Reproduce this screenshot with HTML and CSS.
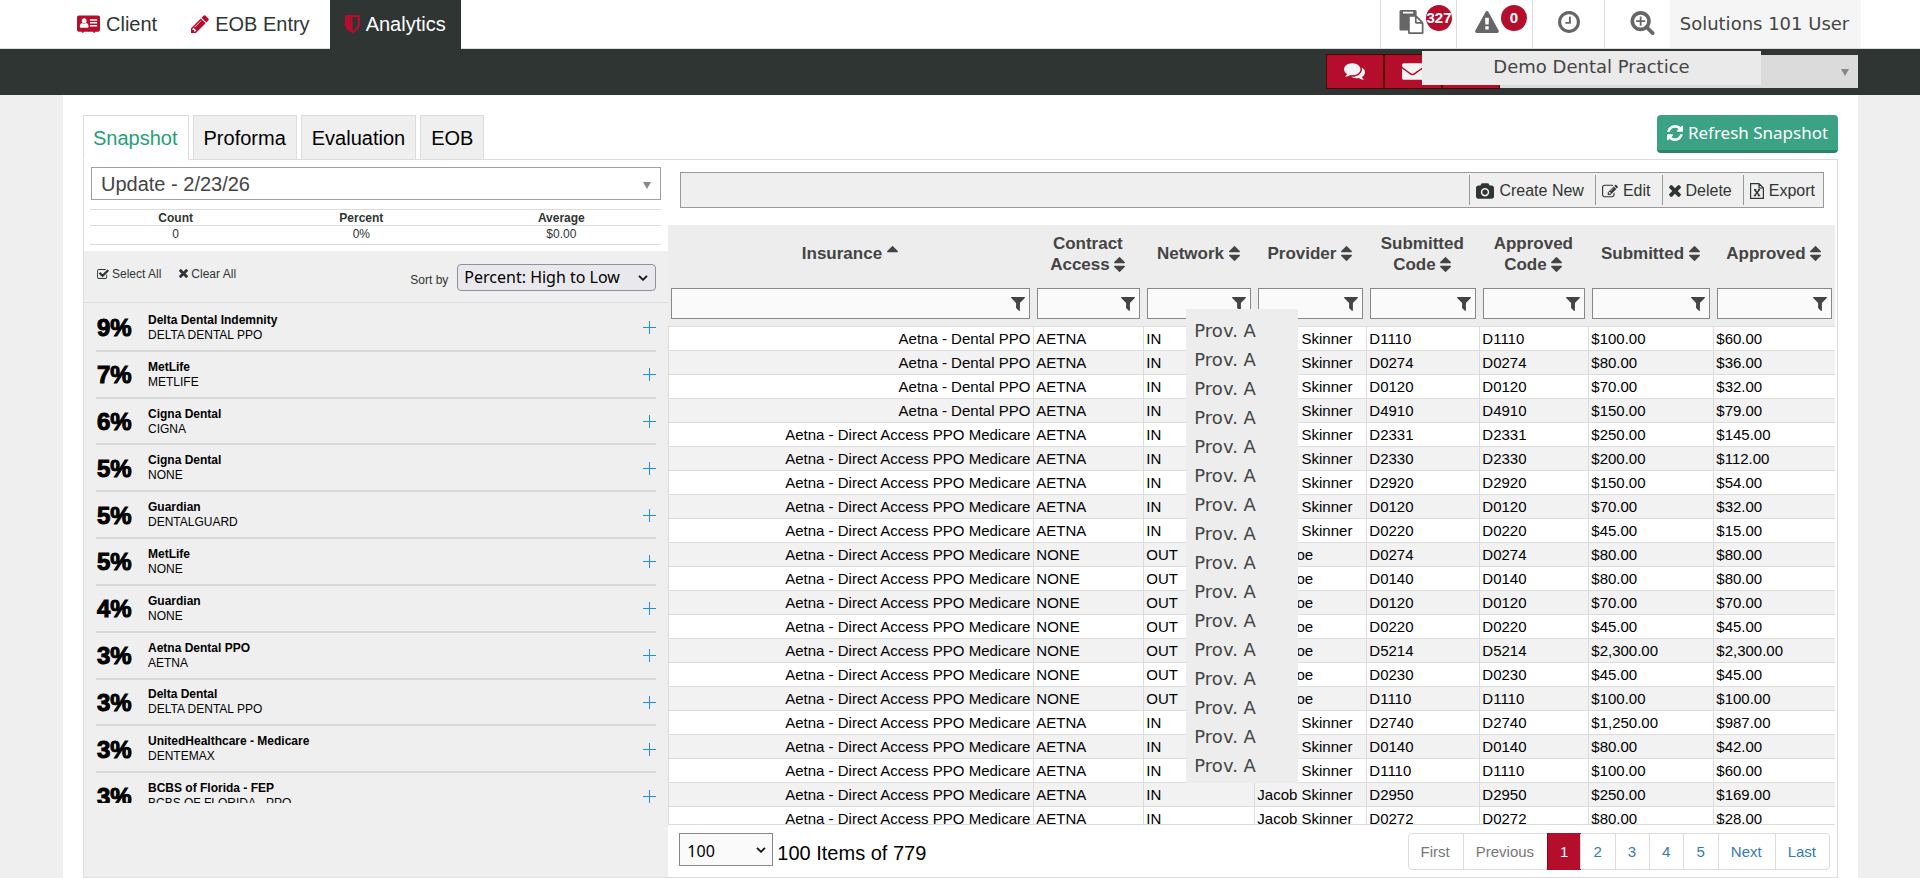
FILE: index.html
```html
<!DOCTYPE html>
<html lang="en">
<head>
<meta charset="utf-8">
<title>Analytics - Snapshot</title>
<link rel="stylesheet" href="styles.css">
</head>
<body>
<svg class="sprite" aria-hidden="true">
  <symbol id="i-card" viewBox="0 0 24 18"><path fill-rule="evenodd" d="M2 0h20a2 2 0 0 1 2 2v13a2 2 0 0 1-2 2h-3v1h-2v-1H7v1H5v-1H2a2 2 0 0 1-2-2V2a2 2 0 0 1 2-2zM7.500 3C5.800 3 5 4.200 5 5.500S5.800 8.500 7.500 8.500 10 7 10 5.500 9.200 3 7.500 3zM5.300 8C3.500 8.500 3 10 3 11.500 3 12.500 3.500 13 4.500 13h6c1 0 1.500-.5 1.500-1.500 0-1.500-.5-3-2.300-3.500-1.400 1.300-3 1.300-4.400 0zM13.500 4v1.500H21V4zm0 3v1.500H21V7zm0 3v1.500H21V10z"/></symbol>
  <symbol id="i-pencil" viewBox="128 128 1536 1536"><path d="M491 1536l91-91-235-235-91 91v107h128v128h107zm523-928q0-22-22-22-10 0-17 7l-542 542q-7 7-7 17 0 22 22 22 10 0 17-7l542-542q7-7 7-17zm-54-192l416 416-832 832h-416v-416zm683 96q0 53-37 90l-166 166-416-416 166-165q36-38 90-38 53 0 91 38l235 234q37 39 37 91z"/></symbol>
  <symbol id="i-shield" viewBox="256 128 1280 1536"><path d="M1344 960v-640h-448v1137q119-63 213-137 235-184 235-360zm192-768v768q0 86-33.500 170.500t-83 150-118 127.500-126.500 103-121 77.500-89.500 49.500-42.500 20q-12 6-26 6t-26-6q-16-7-42.500-20t-89.500-49.500-121-77.500-126.500-103-118-127.500-83-150-33.500-170.500v-768q0-26 19-45t45-19h1152q26 0 45 19t19 45z"/></symbol>
  <symbol id="i-paste" viewBox="0 0 1792 1792"><path d="M768 1664h896v-640h-416q-40 0-68-28t-28-68v-416h-384v1152zm256-1440v-64q0-13-9.500-22.500t-22.500-9.500h-704q-13 0-22.500 9.500t-9.500 22.500v64q0 13 9.500 22.500t22.500 9.500h704q13 0 22.500-9.500t9.500-22.500zm256 672h299l-299-299v299zm512 128v672q0 40-28 68t-68 28h-960q-40 0-68-28t-28-68v-160h-544q-40 0-68-28t-28-68v-1344q0-40 28-68t68-28h1088q40 0 68 28t28 68v328q21 13 36 28l408 408q28 28 48 76t20 88z"/></symbol>
  <symbol id="i-warn" viewBox="0 0 1792 1664"><path d="M1024 1375v-190q0-14-9.500-23.500t-22.500-9.500h-192q-13 0-22.500 9.500t-9.500 23.500v190q0 14 9.500 23.500t22.500 9.500h192q13 0 22.500-9.500t9.500-23.500zm-2-374l18-459q0-12-10-19-13-11-24-11h-220q-11 0-24 11-10 7-10 21l17 457q0 10 10 16.500t24 6.500h185q14 0 23.500-6.500t10.500-16.500zm-14-934l768 1408q35 63-2 126-17 29-46.500 46t-63.500 17h-1536q-34 0-63.500-17t-46.500-46q-37-63-2-126l768-1408q17-31 47-49t65-18 65 18 47 49z"/></symbol>
  <symbol id="i-clock" viewBox="128 128 1536 1536"><path d="M1024 544v448q0 14-9 23t-23 9h-320q-14 0-23-9t-9-23v-64q0-14 9-23t23-9h224v-352q0-14 9-23t23-9h64q14 0 23 9t9 23zm416 352q0-148-73-273t-198-198-273-73-273 73-198 198-73 273 73 273 198 198 273 73 273-73 198-198 73-273zm224 0q0 209-103 385.500t-279.500 279.500-385.500 103-385.500-103-279.500-279.500-103-385.500 103-385.500 279.500-279.500 385.500-103 385.500 103 279.500 279.500 103 385.500z"/></symbol>
  <symbol id="i-zoom" viewBox="64 128 1664 1664"><path d="M1088 800v64q0 13-9.500 22.500t-22.500 9.500h-224v224q0 13-9.500 22.500t-22.500 9.500h-64q-13 0-22.500-9.500t-9.500-22.500v-224h-224q-13 0-22.500-9.500t-9.500-22.500v-64q0-13 9.500-22.500t22.500-9.500h224v-224q0-13 9.500-22.500t22.500-9.500h64q13 0 22.500 9.500t9.500 22.500v224h224q13 0 22.500 9.500t9.500 22.500zm128 32q0-185-131.500-316.500t-316.500-131.500-316.500 131.500-131.500 316.500 131.500 316.500 316.500 131.500 316.500-131.500 131.500-316.500zm512 832q0 53-37.500 90.500t-90.500 37.500q-54 0-90-38l-343-342q-179 124-399 124-143 0-273.500-55.500t-225-150-150-225-55.500-273.500 55.500-273.500 150-225 225-150 273.500-55.500 273.500 55.500 225 150 150 225 55.500 273.500q0 220-124 399l343 343q37 37 37 90z"/></symbol>
  <symbol id="i-comments" viewBox="0 256 1792 1408"><path d="M1408 768q0 139-94 257t-256.500 186.500-353.500 68.500q-86 0-176-16-124 88-278 128-36 9-86 16h-3q-11 0-20.500-8t-11.500-21q-1-3-1-6.500t.5-6.500 2-6l2.500-5 3.500-5.500 4-5 4.500-5 4-4.500q5-6 23-25t26-29.500 22.500-29 25-38.500 20.500-44q-124-72-195-177t-71-224q0-139 94-257t256.500-186.500 353.500-68.500 353.500 68.500 256.500 186.500 94 257zm384 256q0 120-71 224.500t-195 176.500q10 24 20.500 44t25 38.500 22.500 29 26 29.500 23 25q1 1 4 4.500t4.500 5 4 5 3.500 5.500l2.500 5 2 6 .5 6.500-1 6.500q-3 14-13 22t-22 7q-50-7-86-16-154-40-278-128-90 16-176 16-271 0-472-132 58 4 88 4 161 0 309-45t264-129q125-92 192-212t67-254q0-77-23-152 129 71 204 178t75 230z"/></symbol>
  <symbol id="i-mail" viewBox="0 256 1792 1408"><path d="M1792 710v794q0 66-47 113t-113 47h-1472q-66 0-113-47t-47-113v-794q44 49 101 87 362 246 497 345 57 42 92.500 65.500t94.500 48 110 24.500h2q51 0 110-24.500t94.500-48 92.500-65.500q170-123 498-345 57-39 100-87zm0-294q0 79-49 151t-122 123q-376 261-468 325-10 7-42.500 30.500t-54 38-52 32.500-57.500 27-50 9h-2q-23 0-50-9t-57.500-27-52-32.500-54-38-42.500-30.500q-91-64-262-182.500t-205-142.500q-62-42-117-115.500t-55-136.500q0-78 41.500-130t118.500-52h1472q65 0 112.500 47t47.500 113z"/></symbol>
  <symbol id="i-refresh" viewBox="128 128 1536 1536"><path d="M1639 1056q0 5-1 7-64 268-268 434.500t-478 166.500q-146 0-282.500-55t-243.500-157l-129 129q-19 19-45 19t-45-19-19-45v-448q0-26 19-45t45-19h448q26 0 45 19t19 45-19 45l-137 137q71 66 161 102t187 36q134 0 250-65t186-179q11-17 53-117 8-23 30-23h192q13 0 22.500 9.500t9.500 22.500zm25-800v448q0 26-19 45t-45 19h-448q-26 0-45-19t-19-45 19-45l138-138q-148-137-349-137-134 0-250 65t-186 179q-11 17-53 117-8 23-30 23h-199q-13 0-22.500-9.500t-9.500-22.500v-7q65-268 270-434.500t480-166.500q146 0 284 55.500t245 156.500l130-129q19-19 45-19t45 19 19 45z"/></symbol>
  <symbol id="i-check" viewBox="64 128 1664 1408"><path d="M1472 930v318q0 119-84.500 203.500t-203.500 84.500h-832q-119 0-203.500-84.500t-84.500-203.500v-832q0-119 84.500-203.500t203.500-84.500h832q63 0 117 25 15 7 18 23 3 17-9 29l-49 49q-10 10-23 10-3 0-9-2-23-6-45-6h-832q-66 0-113 47t-47 113v832q0 66 47 113t113 47h832q66 0 113-47t47-113v-254q0-13 9-22l64-64q10-10 23-10 6 0 12 3 20 8 20 29zm231-489l-814 814q-24 24-57 24t-57-24l-430-430q-24-24-24-57t24-57l110-110q24-24 57-24t57 24l263 263 647-647q24-24 57-24t57 24l110 110q24 24 24 57t-24 57z"/></symbol>
  <symbol id="i-times" viewBox="302 366 1188 1188"><path d="M1490 1322q0 40-28 68l-136 136q-28 28-68 28t-68-28l-294-294-294 294q-28 28-68 28t-68-28l-136-136q-28-28-28-68t28-68l294-294-294-294q-28-28-28-68t28-68l136-136q28-28 68-28t68 28l294 294 294-294q28-28 68-28t68 28l136 136q28 28 28 68t-28 68l-294 294 294 294q28 28 28 68z"/></symbol>
  <symbol id="i-camera" viewBox="-64 0 1920 1664"><path d="M896 672q119 0 203.500 84.500t84.500 203.500-84.500 203.500-203.500 84.500-203.500-84.500-84.500-203.500 84.500-203.500 203.500-84.500zm704-416q106 0 181 75t75 181v896q0 106-75 181t-181 75h-1408q-106 0-181-75t-75-181v-896q0-106 75-181t181-75h224l51-136q19-49 69.500-84.500t103.500-35.500h512q53 0 103.500 35.500t69.500 84.500l51 136h224zm-704 1152q185 0 316.500-131.500t131.500-316.500-131.500-316.500-316.500-131.500-316.500 131.500-131.500 316.500 131.500 316.500 316.500 131.500z"/></symbol>
  <symbol id="i-edit" viewBox="0 128 1792 1408"><path d="M888 1184l116-116-152-152-116 116v56h96v96h56zm440-720q-16-16-33 1l-350 350q-17 17-1 33t33-1l350-350q17-17 1-33zm80 594v190q0 119-84.500 203.500t-203.500 84.500h-832q-119 0-203.500-84.500t-84.500-203.500v-832q0-119 84.500-203.500t203.500-84.500h832q63 0 117 25 15 7 18 23 3 17-9 29l-49 49q-14 14-32 8-23-6-45-6h-832q-66 0-113 47t-47 113v832q0 66 47 113t113 47h832q66 0 113-47t47-113v-126q0-13 9-22l64-64q15-15 35-7t20 29zm-96-738l288 288-672 672h-288v-288zm444 132l-92 92-288-288 92-92q28-28 68-28t68 28l152 152q28 28 28 68t-28 68z"/></symbol>
  <symbol id="i-excel" viewBox="0 0 14 16"><path fill="none" stroke="currentColor" stroke-width="1.200" d="M.6.6h8.400l4.400 4.400v10.400H.6zM9 .6V5h4.400M4 6.700h2.400M8 6.700h2.200M3.800 12.600H6M7.700 12.600h2.500"/><path fill="none" stroke="currentColor" stroke-width="1.500" d="M4.800 7l4.400 5.400M9.200 7l-4.400 5.400"/></symbol>
  <symbol id="i-sort" viewBox="384 192 1024 1408"><path d="M1408 1088q0 26-19 45l-448 448q-19 19-45 19t-45-19l-448-448q-19-19-19-45t19-45 45-19h896q26 0 45 19t19 45zm0-384q0 26-19 45t-45 19h-896q-26 0-45-19t-19-45 19-45l448-448q19-19 45-19t45 19l448 448q19 19 19 45z"/></symbol>
  <symbol id="i-asc" viewBox="384 192 1024 1408"><path d="M1408 704q0 26-19 45t-45 19h-896q-26 0-45-19t-19-45 19-45l448-448q19-19 45-19t45 19l448 448q19 19 19 45z"/></symbol>
  <symbol id="i-filter" viewBox="192 256 1408 1408"><path d="M1595 295q17 41-14 70l-493 493v742q0 42-39 59-13 5-25 5-27 0-45-19l-256-256q-19-19-19-45v-486l-493-493q-31-29-14-70 17-39 59-39h1280q42 0 59 39z"/></symbol>
  <symbol id="i-chevron" viewBox="0 0 10 6"><path fill="none" stroke="currentColor" stroke-width="1.800" d="M1 .8l4 4 4-4"/></symbol>
  <symbol id="i-plus" viewBox="0 0 13 13"><path fill="none" stroke="currentColor" d="M6.500 0v13M0 6.500h13"/></symbol>
</svg>

<header class="topbar">
  <nav class="mainnav">
    <a href="#"><svg class="ic ic-card"><use href="#i-card"/></svg>Client</a>
    <a href="#"><svg class="ic ic-pencil"><use href="#i-pencil"/></svg>EOB Entry</a>
    <a href="#" class="current"><svg class="ic ic-shield"><use href="#i-shield"/></svg>Analytics</a>
  </nav>
  <div class="tools">
    <button type="button" class="tool counted" aria-label="Tasks"><svg class="ic ic-24"><use href="#i-paste"/></svg><span class="badge">327</span></button>
    <button type="button" class="tool counted" aria-label="Alerts"><svg class="ic ic-22"><use href="#i-warn"/></svg><span class="badge">0</span></button>
    <button type="button" class="tool" aria-label="History"><svg class="ic ic-22"><use href="#i-clock"/></svg></button>
    <button type="button" class="tool search" aria-label="Search"><svg class="ic ic-24"><use href="#i-zoom"/></svg></button>
    <div class="user">Solutions 101 User</div>
  </div>
</header>

<div class="practicebar">
  <button type="button" class="redbtn" aria-label="Comments"><svg class="ic ic-20"><use href="#i-comments"/></svg></button>
  <button type="button" class="redbtn" aria-label="Mail"><svg class="ic ic-20"><use href="#i-mail"/></svg></button>
  <button type="button" class="redbtn" aria-label="More"></button>
  <div class="practice"><span class="practice-name">Demo Dental Practice</span><span class="arrow"></span></div>
</div>

<main class="page">
  <div class="tabrow">
    <nav class="tabs">
      <a href="#" class="tab active">Snapshot</a>
      <a href="#" class="tab">Proforma</a>
      <a href="#" class="tab">Evaluation</a>
      <a href="#" class="tab">EOB</a>
    </nav>
    <button type="button" class="refresh"><svg class="ic ic-16"><use href="#i-refresh"/></svg>Refresh Snapshot</button>
  </div>

  <div class="panel">
    <section class="side">
      <button type="button" class="update">Update - 2/23/26<span class="arrow"></span></button>
      <table class="stats">
        <colgroup><col class="s1"><col class="s2"><col class="s3"></colgroup>
        <tr><th>Count</th><th>Percent</th><th>Average</th></tr>
        <tr><td>0</td><td>0%</td><td>$0.00</td></tr>
      </table>
      <div class="listbox">
        <div class="listtools">
          <button type="button"><svg class="ic ic-check"><use href="#i-check"/></svg>Select All</button>
          <button type="button"><svg class="ic ic-x"><use href="#i-times"/></svg>Clear All</button>
          <label class="sortlabel" for="sort">Sort by</label>
          <span class="pick sortpick"><select id="sort"><option>Percent: High to Low</option></select><svg class="ic chev"><use href="#i-chevron"/></svg></span>
        </div>
        <div class="listview">
          <ul class="plans">
            <li><b class="pct">9%</b><span class="plan"><b>Delta Dental Indemnity</b>DELTA DENTAL PPO</span><svg class="ic plus"><use href="#i-plus"/></svg></li>
            <li><b class="pct">7%</b><span class="plan"><b>MetLife</b>METLIFE</span><svg class="ic plus"><use href="#i-plus"/></svg></li>
            <li><b class="pct">6%</b><span class="plan"><b>Cigna Dental</b>CIGNA</span><svg class="ic plus"><use href="#i-plus"/></svg></li>
            <li><b class="pct">5%</b><span class="plan"><b>Cigna Dental</b>NONE</span><svg class="ic plus"><use href="#i-plus"/></svg></li>
            <li><b class="pct">5%</b><span class="plan"><b>Guardian</b>DENTALGUARD</span><svg class="ic plus"><use href="#i-plus"/></svg></li>
            <li><b class="pct">5%</b><span class="plan"><b>MetLife</b>NONE</span><svg class="ic plus"><use href="#i-plus"/></svg></li>
            <li><b class="pct">4%</b><span class="plan"><b>Guardian</b>NONE</span><svg class="ic plus"><use href="#i-plus"/></svg></li>
            <li><b class="pct">3%</b><span class="plan"><b>Aetna Dental PPO</b>AETNA</span><svg class="ic plus"><use href="#i-plus"/></svg></li>
            <li><b class="pct">3%</b><span class="plan"><b>Delta Dental</b>DELTA DENTAL PPO</span><svg class="ic plus"><use href="#i-plus"/></svg></li>
            <li><b class="pct">3%</b><span class="plan"><b>UnitedHealthcare - Medicare</b>DENTEMAX</span><svg class="ic plus"><use href="#i-plus"/></svg></li>
            <li><b class="pct">3%</b><span class="plan"><b>BCBS of Florida - FEP</b>BCBS OF FLORIDA - PPO</span><svg class="ic plus"><use href="#i-plus"/></svg></li>
          </ul>
        </div>
      </div>
    </section>

    <section class="main">
      <div class="toolbar">
        <button type="button"><svg class="ic ic-18"><use href="#i-camera"/></svg>Create New</button>
        <button type="button"><svg class="ic ic-16"><use href="#i-edit"/></svg>Edit</button>
        <button type="button"><svg class="ic ic-11"><use href="#i-times"/></svg>Delete</button>
        <button type="button"><svg class="ic ic-excel"><use href="#i-excel"/></svg>Export</button>
      </div>
      <div class="gridwrap">
        <div class="gridview">
          <table class="grid">
            <colgroup><col class="c1"><col class="c2"><col class="c3"><col class="c4"><col class="c5"><col class="c6"><col class="c7"><col class="c8"></colgroup>
            <thead>
              <tr class="heads">
                <th>Insurance <svg class="ic srt"><use href="#i-asc"/></svg></th>
                <th>Contract Access&nbsp;<svg class="ic srt"><use href="#i-sort"/></svg></th>
                <th>Network <svg class="ic srt"><use href="#i-sort"/></svg></th>
                <th>Provider <svg class="ic srt"><use href="#i-sort"/></svg></th>
                <th>Submitted Code <svg class="ic srt"><use href="#i-sort"/></svg></th>
                <th>Approved Code <svg class="ic srt"><use href="#i-sort"/></svg></th>
                <th>Submitted <svg class="ic srt"><use href="#i-sort"/></svg></th>
                <th>Approved <svg class="ic srt"><use href="#i-sort"/></svg></th>
              </tr>
              <tr class="filters">
                <th><div class="filter"><input aria-label="Filter insurance"><svg class="ic ic-14"><use href="#i-filter"/></svg></div></th>
                <th><div class="filter"><input aria-label="Filter contract access"><svg class="ic ic-14"><use href="#i-filter"/></svg></div></th>
                <th><div class="filter"><input aria-label="Filter network"><svg class="ic ic-14"><use href="#i-filter"/></svg></div></th>
                <th><div class="filter"><input aria-label="Filter provider"><svg class="ic ic-14"><use href="#i-filter"/></svg></div></th>
                <th><div class="filter"><input aria-label="Filter submitted code"><svg class="ic ic-14"><use href="#i-filter"/></svg></div></th>
                <th><div class="filter"><input aria-label="Filter approved code"><svg class="ic ic-14"><use href="#i-filter"/></svg></div></th>
                <th><div class="filter"><input aria-label="Filter submitted"><svg class="ic ic-14"><use href="#i-filter"/></svg></div></th>
                <th><div class="filter"><input aria-label="Filter approved"><svg class="ic ic-14"><use href="#i-filter"/></svg></div></th>
              </tr>
            </thead>
            <tbody>
              <tr><td>Aetna - Dental PPO<td>AETNA<td>IN<td>Jacob Skinner<td>D1110<td>D1110<td>$100.00<td>$60.00
              <tr><td>Aetna - Dental PPO<td>AETNA<td>IN<td>Jacob Skinner<td>D0274<td>D0274<td>$80.00<td>$36.00
              <tr><td>Aetna - Dental PPO<td>AETNA<td>IN<td>Jacob Skinner<td>D0120<td>D0120<td>$70.00<td>$32.00
              <tr><td>Aetna - Dental PPO<td>AETNA<td>IN<td>Jacob Skinner<td>D4910<td>D4910<td>$150.00<td>$79.00
              <tr><td>Aetna - Direct Access PPO Medicare<td>AETNA<td>IN<td>Jacob Skinner<td>D2331<td>D2331<td>$250.00<td>$145.00
              <tr><td>Aetna - Direct Access PPO Medicare<td>AETNA<td>IN<td>Jacob Skinner<td>D2330<td>D2330<td>$200.00<td>$112.00
              <tr><td>Aetna - Direct Access PPO Medicare<td>AETNA<td>IN<td>Jacob Skinner<td>D2920<td>D2920<td>$150.00<td>$54.00
              <tr><td>Aetna - Direct Access PPO Medicare<td>AETNA<td>IN<td>Jacob Skinner<td>D0120<td>D0120<td>$70.00<td>$32.00
              <tr><td>Aetna - Direct Access PPO Medicare<td>AETNA<td>IN<td>Jacob Skinner<td>D0220<td>D0220<td>$45.00<td>$15.00
              <tr><td>Aetna - Direct Access PPO Medicare<td>NONE<td>OUT<td>Jon Doe<td>D0274<td>D0274<td>$80.00<td>$80.00
              <tr><td>Aetna - Direct Access PPO Medicare<td>NONE<td>OUT<td>Jon Doe<td>D0140<td>D0140<td>$80.00<td>$80.00
              <tr><td>Aetna - Direct Access PPO Medicare<td>NONE<td>OUT<td>Jon Doe<td>D0120<td>D0120<td>$70.00<td>$70.00
              <tr><td>Aetna - Direct Access PPO Medicare<td>NONE<td>OUT<td>Jon Doe<td>D0220<td>D0220<td>$45.00<td>$45.00
              <tr><td>Aetna - Direct Access PPO Medicare<td>NONE<td>OUT<td>Jon Doe<td>D5214<td>D5214<td>$2,300.00<td>$2,300.00
              <tr><td>Aetna - Direct Access PPO Medicare<td>NONE<td>OUT<td>Jon Doe<td>D0230<td>D0230<td>$45.00<td>$45.00
              <tr><td>Aetna - Direct Access PPO Medicare<td>NONE<td>OUT<td>Jon Doe<td>D1110<td>D1110<td>$100.00<td>$100.00
              <tr><td>Aetna - Direct Access PPO Medicare<td>AETNA<td>IN<td>Jacob Skinner<td>D2740<td>D2740<td>$1,250.00<td>$987.00
              <tr><td>Aetna - Direct Access PPO Medicare<td>AETNA<td>IN<td>Jacob Skinner<td>D0140<td>D0140<td>$80.00<td>$42.00
              <tr><td>Aetna - Direct Access PPO Medicare<td>AETNA<td>IN<td>Jacob Skinner<td>D1110<td>D1110<td>$100.00<td>$60.00
              <tr><td>Aetna - Direct Access PPO Medicare<td>AETNA<td>IN<td>Jacob Skinner<td>D2950<td>D2950<td>$250.00<td>$169.00
              <tr><td>Aetna - Direct Access PPO Medicare<td>AETNA<td>IN<td>Jacob Skinner<td>D0272<td>D0272<td>$80.00<td>$28.00
            </tbody>
          </table>
        </div>
        <div class="provlist">
          <div>Prov. A</div><div>Prov. A</div><div>Prov. A</div><div>Prov. A</div>
          <div>Prov. A</div><div>Prov. A</div><div>Prov. A</div><div>Prov. A</div>
          <div>Prov. A</div><div>Prov. A</div><div>Prov. A</div><div>Prov. A</div>
          <div>Prov. A</div><div>Prov. A</div><div>Prov. A</div><div>Prov. A</div>
        </div>
      </div>
      <footer class="pager">
        <span class="pick sizepick"><select id="size" aria-label="Items per page"><option>100</option></select><svg class="ic chev"><use href="#i-chevron"/></svg></span>
        <label class="count" for="size">100 Items of 779</label>
        <nav class="pages">
          <a href="#" class="off">First</a><a href="#" class="off">Previous</a><a href="#" class="on">1</a><a href="#">2</a><a href="#">3</a><a href="#">4</a><a href="#">5</a><a href="#">Next</a><a href="#">Last</a>
        </nav>
      </footer>
    </section>
  </div>
</main>
</body>
</html>
```
FILE: styles.css
```css
* { box-sizing: border-box; }
body {
  margin: 0;
  background: #efefef;
  color: #2f3533;
  font: 16px/20px "Liberation Sans", Arial, sans-serif;
}
a { text-decoration: none; color: inherit; }
button {
  font: inherit;
  color: inherit;
  border: 0;
  padding: 0;
  background: none;
}
.sprite { display: none; }
.ic { width: 16px; height: 16px; fill: currentColor; flex: none; display: block; }
.ic-24 { width: 25px; height: 24px; }
.ic-22 { width: 24px; height: 22px; }
.ic-20 { width: 21px; height: 17px; }
.ic-18 { width: 18px; height: 16px; }
.ic-16 { width: 16px; height: 16px; }
.ic-14 { width: 14px; height: 14px; }
.ic-11 { width: 12px; height: 12px; }
.ic-card { width: 23px; height: 18px; }
.ic-pencil { width: 18px; height: 18px; }
.ic-shield { width: 15px; height: 18px; }
.ic-excel { width: 14px; height: 16px; }
.ic-check { width: 12px; height: 10px; }
.ic-x { width: 9px; height: 9px; }

/* top bar */
.topbar {
  display: flex;
  justify-content: space-between;
  height: 49px;
  padding: 0 59px 0 63px;
  background: #fff;
  border-bottom: 1px solid #dcdcdc;
}
.mainnav { display: flex; font-size: 20px; }
.mainnav a { display: flex; align-items: center; gap: 6px; height: 49px; padding: 0 14px 2px; }
.mainnav a:nth-child(2) { padding-left: 20px; padding-right: 20px; }
.mainnav a.current { background: #2f3533; color: #fff; padding: 0 15px 2px; }
.mainnav .ic { color: #b50e2d; }
.tools { display: flex; color: #666; }
.tool {
  display: flex;
  align-items: center;
  justify-content: center;
  width: 72px;
  height: 48px;
  padding-bottom: 4px;
  border-left: 1px solid #dcdcdc;
}
.tool.counted { width: 76px; justify-content: flex-start; gap: 2px; padding-left: 18px; }
.tool.search { width: 66px; padding-left: 9px; padding-bottom: 2px; }
.badge {
  flex: none;
  width: 26px;
  height: 26px;
  margin-bottom: 8px;
  border-radius: 50%;
  background: #b50e2d;
  color: #fff;
  font: bold 15px/26px "Liberation Sans", Arial, sans-serif;
  text-align: center;
}
.user {
  width: 191px;
  padding-right: 2px;
  background: #f5f5f5;
  color: #444;
  text-align: center;
  font: 18px/48px "DejaVu Sans", sans-serif;
}

/* practice bar */
.practicebar {
  display: flex;
  justify-content: flex-end;
  height: 46px;
  padding: 5px 62px 0 0;
  background: #2f3533;
}
.redbtn {
  display: flex;
  align-items: center;
  justify-content: center;
  width: 58px;
  height: 35px;
  border: 1px solid #500;
  background: #b50e2d;
  color: #f3f3f3;
}
.redbtn .ic { margin-right: 2px; }
.practice {
  position: relative;
  width: 358px;
  height: 33px;
  margin-top: 1px;
  background: #dbdbdb;
}
.practice-name {
  position: absolute;
  left: -78px;
  top: -4px;
  width: 339px;
  height: 34px;
  background: #eaeaea;
  color: #444;
  text-align: center;
  font: 18px/32px "DejaVu Sans", sans-serif;
}
.arrow {
  position: absolute;
  right: 9px;
  top: 14px;
  border: solid transparent;
  border-width: 7px 4px 0;
  border-top-color: #888;
}

/* page */
.page { margin: 0 62px 0 63px; padding: 20px 20px 0; background: #fff; }
.tabrow { display: flex; justify-content: space-between; align-items: flex-start; }
.tabs { display: flex; gap: 4px; position: relative; margin-bottom: -1px; }
.tab {
  height: 45px;
  padding: 0 10px;
  border: 1px solid #dcdcdc;
  background: #efefef;
  color: #000;
  font-size: 20px;
  line-height: 44px;
}
.tab.active { padding: 0 10px 0 9px; background: #fff; color: #24a077; border-bottom-color: #fff; }
.refresh {
  display: flex;
  align-items: center;
  justify-content: center;
  gap: 5px;
  width: 181px;
  height: 38px;
  border-radius: 4px;
  border-bottom: 3px solid #2c836a;
  background: #3ba384;
  color: #fff;
  font: 17px/20px "Noto Sans", sans-serif;
}
.panel {
  display: grid;
  grid-template-columns: minmax(0, 1fr) minmax(0, 2fr);
  border: 1px solid #dcdcdc;
}

/* left column */
.side { display: flex; flex-direction: column; padding-top: 7px; }
.update {
  position: relative;
  height: 33px;
  margin: 0 7px;
  padding-left: 9px;
  border: 1px solid #a0a0a0;
  background: #fff;
  color: #444;
  font-size: 20px;
  text-align: left;
}
.stats {
  margin: 9px 7px 6px 6px;
  border-collapse: collapse;
  table-layout: fixed;
  font-size: 12px;
  line-height: 14px;
  text-align: center;
}
.s1 { width: 30%; } .s2 { width: 35%; } .s3 { width: 35%; }
.stats th, .stats td { padding: 1px 0 0; border: solid #dcdcdc; border-width: 1px 0; }
.stats td { padding-bottom: 3px; }
.listbox { flex: 1; background: #efefef; }
.listtools {
  display: flex;
  align-items: center;
  gap: 18px;
  height: 52px;
  padding: 0 12px 6px 13px;
  border-bottom: 1px solid #dcdcdc;
  font-size: 12px;
}
.listtools button { display: flex; align-items: center; gap: 3px; }
.sortlabel { margin: 12px -9px 0 auto; }
.pick { position: relative; display: flex; }
.pick select {
  appearance: none;
  width: 100%;
  color: #000;
  font: 16px/20px "Noto Sans", sans-serif;
}
.chev { position: absolute; width: 10px; height: 6px; color: #111; pointer-events: none; }
.sortpick { width: 199px; height: 27px; margin-top: 7px; }
.sortpick select { border: 1px solid #8f8f9d; border-radius: 4px; padding: 0 6px; background: #e9e9ed; }
.sortpick .chev { right: 8px; top: 11px; }
.listview { height: 500px; padding-top: 2px; overflow: hidden; }
.plans {
  display: grid;
  grid-auto-rows: 1fr;
  height: 515px;
  margin: 0 12px;
  padding: 0;
  list-style: none;
  color: #000;
}
.plans li {
  display: flex;
  align-items: center;
  padding: 1px 0 0 1px;
  border-bottom: 2px solid #d8d8d8;
  font-size: 12px;
  line-height: 15px;
}
.pct { width: 51px; font-size: 24px; -webkit-text-stroke: 1px #000; }
.plan { flex: 1; }
.plan b { display: block; }
.plus { width: 13px; height: 13px; color: #1a8ff0; }

/* right column */
.main { padding-top: 12px; }
.toolbar {
  display: flex;
  justify-content: flex-end;
  height: 36px;
  margin: 0 13px 17px 12px;
  padding: 2px 0;
  border: 1px solid #999;
  background: #efefef;
}
.toolbar button {
  display: flex;
  align-items: center;
  gap: 5px;
  padding: 1px 11px 0 6px;
  border-left: 1px solid #999;
}
.toolbar button:last-child { padding-right: 8px; }
.gridwrap { position: relative; margin-right: 2px; }
.gridview { height: 600px; overflow: hidden; border-bottom: 1px solid #dcdcdc; }
.grid {
  width: 100%;
  table-layout: fixed;
  border-collapse: separate;
  border-spacing: 0;
  font-size: 15px;
  line-height: 22px;
  color: #000;
}
.c1 { width: 366px; } .c2 { width: 110px; } .c3 { width: 111px; } .c4 { width: 112px; }
.c5 { width: 113px; } .c6 { width: 109px; } .c7 { width: 125px; } .c8 { width: 122px; }
.grid thead { background: #ededed; color: #444; }
.heads th { height: 57px; padding: 0 9px 0 6px; font-size: 17px; line-height: 21px; }
.srt { display: inline-block; width: 11px; height: 15px; vertical-align: -2px; }
.filters th { height: 45px; padding: 6px 4px 7px 3px; border-bottom: 1px solid #dcdcdc; }
.filter {
  display: flex;
  align-items: center;
  height: 31px;
  padding-right: 4px;
  border: 1px solid #888;
  background: #fafafa;
}
.filter input { flex: 1; width: 0; border: 0; padding: 0 4px; background: none; }
.grid td {
  height: 24px;
  padding: 1px 2px 0;
  border: solid #dcdcdc;
  border-width: 0 1px 1px 0;
  white-space: nowrap;
}
.grid td:first-child { padding-right: 3px; text-align: right; border-left-width: 1px; }
.grid tbody tr { background: #fff; }
.grid tbody tr:nth-child(even) { background: #f2f2f2; }
.provlist {
  position: absolute;
  left: 518px;
  top: 84px;
  width: 112px;
  padding: 7px 8px 3px;
  background: #ededed;
  color: #444;
  font: 18px/29px "DejaVu Sans", sans-serif;
}
.pager { display: flex; align-items: flex-start; gap: 4px; padding: 8px 7px 4px 11px; }
.sizepick { width: 94px; height: 33px; }
.sizepick select { border: 1px solid #888; border-radius: 0; padding: 2px 7px 0; background: #fafafa; }
.sizepick .chev { right: 7px; top: 14px; }
.count { color: #000; font-size: 20px; line-height: 40px; }
.pages {
  display: flex;
  margin-left: auto;
  border: 1px solid #dcdcdc;
  border-radius: 4px;
  color: #337ab7;
  font-size: 15px;
  line-height: 35px;
}
.pages a { padding: 0 13px 0 12px; border-left: 1px solid #dcdcdc; }
.pages a:first-child { border-left: 0; }
.pages .off { color: #777; }
.pages .on { margin: -1px -1px -1px 0; line-height: 37px; background: #b50e2d; border-color: #900; color: #fff; }
```
